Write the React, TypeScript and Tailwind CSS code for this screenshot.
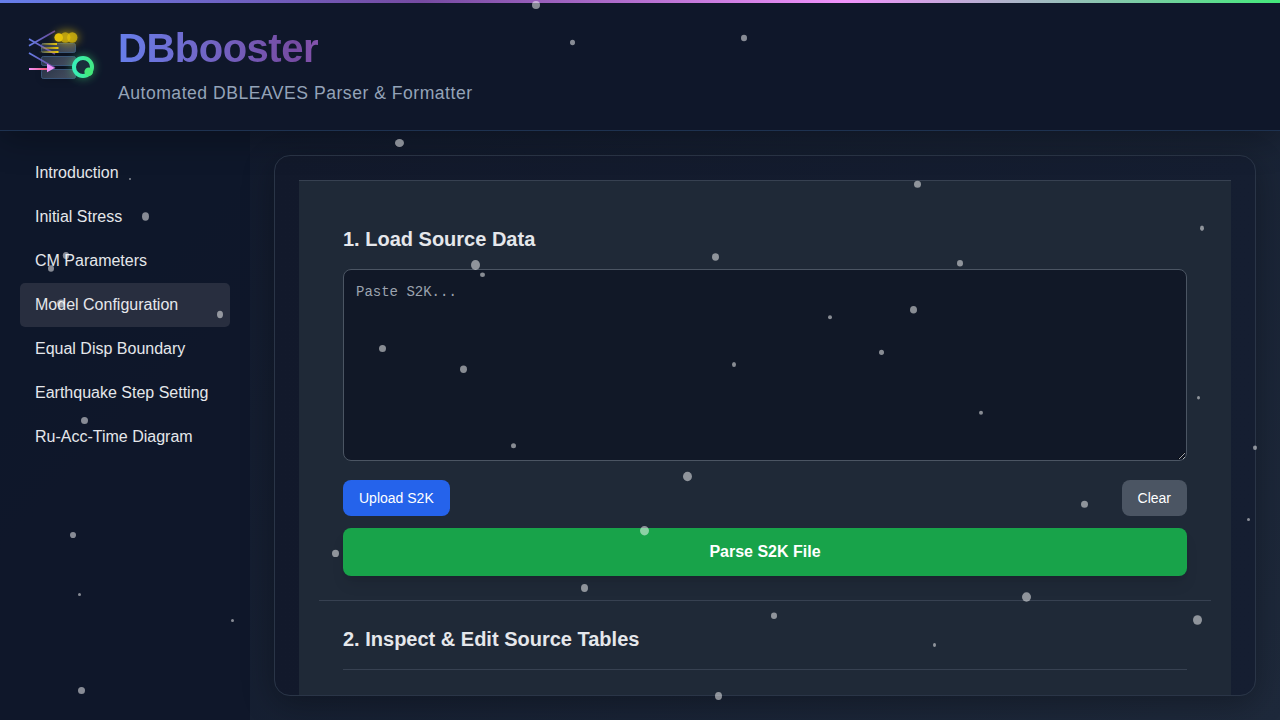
import React from "react";

const navItems = [
  "Introduction",
  "Initial Stress",
  "CM Parameters",
  "Model Configuration",
  "Equal Disp Boundary",
  "Earthquake Step Setting",
  "Ru-Acc-Time Diagram",
];

// x centre, y centre, horizontal radius, vertical radius
const particles: [number, number, number, number][] = [
  [536, 5, 4, 4], [572.5, 42.5, 2.5, 2.7], [744, 38, 3, 3.2], [399.5, 143, 4.5, 4],
  [130, 179, 1, 1], [145.5, 216.5, 3.5, 4.2], [66, 255.5, 3.2, 3.5], [51, 268.5, 3, 3.3],
  [61, 303.5, 4, 4], [220, 314.5, 3, 3.7], [84.5, 420.5, 3.5, 3.5], [73, 535, 3, 3.1],
  [79.5, 594.5, 1.5, 1.5], [232.5, 620.5, 1.5, 1.5], [81.5, 690.5, 3.5, 3.5],
  [475.5, 265, 4.5, 5], [482.5, 274.7, 2.5, 2.3], [715.5, 257, 3.5, 3.7],
  [382.5, 348.5, 3.5, 3.5], [463.5, 369.3, 3.5, 3.7], [734, 364.5, 2, 2.6],
  [917.5, 184.3, 3.5, 3.5], [1202, 228.3, 2, 2.7], [960, 263.3, 3, 3.3],
  [913.5, 309.8, 3.5, 3.8], [830, 317.2, 2, 2], [881.5, 352.3, 2.5, 2.6],
  [981, 412.8, 2, 2], [1198.5, 397.8, 1.5, 1.7], [513.5, 445.8, 2.5, 2.5],
  [687.5, 476.5, 4.5, 4.7], [644.5, 530.8, 4.5, 4.7], [335.5, 553.4, 3.5, 3.7],
  [584.5, 588, 3.5, 4.1], [718.5, 696, 3.5, 4.1], [1255, 447.8, 2, 2.2],
  [1084.5, 504.3, 3.5, 3.5], [1248.5, 519.4, 1.5, 1.5], [1026.5, 597, 4.5, 4.7],
  [774, 615.7, 3, 3.3], [934.5, 645, 1.5, 2], [1197.5, 620, 4.5, 4.8],
];

function Logo() {
  return (
    <svg width="80" height="80" viewBox="20 20 80 80" fill="none" className="shrink-0 overflow-visible">
      <defs>
        <linearGradient id="purple" gradientUnits="userSpaceOnUse" x1="29" y1="0" x2="56" y2="0">
          <stop stopColor="#667eea" />
          <stop offset="1" stopColor="#764ba2" stopOpacity=".85" />
        </linearGradient>
        <linearGradient id="pink" gradientUnits="userSpaceOnUse" x1="29" y1="0" x2="48" y2="0">
          <stop stopColor="#f093fb" />
          <stop offset="1" stopColor="#f5576c" />
        </linearGradient>
        <linearGradient id="gold" gradientUnits="userSpaceOnUse" x1="39" y1="0" x2="58" y2="0">
          <stop stopColor="#ffd700" stopOpacity="0" />
          <stop offset="1" stopColor="#ffd700" stopOpacity=".9" />
        </linearGradient>
        <linearGradient id="disk" x1="0" y1="0" x2="1" y2="0.3">
          <stop stopColor="#2b364a" />
          <stop offset="1" stopColor="#434c5d" />
        </linearGradient>
        <linearGradient id="ring" x1="0" y1="0" x2="1" y2="0">
          <stop stopColor="#38f0b8" />
          <stop offset="1" stopColor="#41ea88" />
        </linearGradient>
        <filter id="glow" x="-100%" y="-200%" width="300%" height="500%">
          <feGaussianBlur stdDeviation="4" />
        </filter>
      </defs>
      <rect x="43" y="46" width="32" height="34" rx="3" fill="#000" opacity=".2" filter="url(#glow)" />
      <g fill="url(#disk)" stroke="#3d5b80" strokeOpacity=".9">
        <rect x="41.5" y="43.5" width="34" height="9" rx="1.8" />
        <rect x="41.5" y="56.5" width="34" height="9" rx="1.8" />
        <rect x="41.5" y="69.5" width="34" height="9" rx="1.8" />
      </g>
      <g stroke="url(#purple)" strokeWidth="1.7">
        <path d="M29 39 55 54" />
        <path d="M29 45.8 55 31" />
        <path d="M29 53 55 68" />
      </g>
      <rect x="29" y="68" width="19" height="2" fill="url(#pink)" />
      <path d="M47 63.7v8.6l7.8-4.3Z" fill="#f093fb" />
      <g fill="url(#gold)">
        <rect x="42" y="43" width="15" height="2" />
        <rect x="41" y="47" width="17.5" height="2" />
        <rect x="39" y="51" width="19.5" height="2" />
      </g>
      <ellipse cx="67" cy="37.5" rx="12" ry="7" fill="#ffd700" opacity=".5" filter="url(#glow)" />
      <g fill="#e6c30a">
        <circle cx="72.3" cy="37.5" r="5.2" opacity=".7" />
        <circle cx="65.3" cy="37.5" r="5.2" opacity=".65" />
        <circle cx="58.7" cy="37.5" r="4.3" />
      </g>
      <circle cx="83" cy="67" r="12" fill="#43e97b" opacity=".42" filter="url(#glow)" />
      <circle cx="83" cy="67" r="9" fill="#1a2e3c" stroke="url(#ring)" strokeWidth="4" />
      <circle cx="88.7" cy="71.7" r="4.3" fill="#43e97b" />
    </svg>
  );
}

export default function App() {
  return (
    <div className="relative flex h-[720px] w-[1280px] flex-col overflow-hidden bg-linear-135 from-[#0f172a] to-[#1e293b] font-['Liberation_Sans',sans-serif] text-[#e5e7eb]">
      <header className="relative z-10 flex h-[131px] shrink-0 items-start gap-[18px] border-b border-[#1e3250] bg-[#0f172a] px-5 pt-5 shadow-[0_8px_32px_rgba(0,0,0,0.3)]">
        <div className="absolute inset-x-0 top-0 h-[3px] bg-[linear-gradient(90deg,#667eea_0%,#764ba2_33%,#f093fb_66%,#43e97b_100%)]" />
        <Logo />
        <div className="pt-1">
          <h1 className="w-[355px] bg-linear-90 from-[#667eea] via-[#764ba2] to-[#f093fb] bg-clip-text text-[40px] leading-[48px] font-bold tracking-[-0.5px] text-transparent">
            DBbooster
          </h1>
          <p className="mt-[7px] text-[17.6px] leading-7 tracking-[0.5px] text-[#94a3b8]">
            Automated DBLEAVES Parser &amp; Formatter
          </p>
        </div>
      </header>

      <div className="flex min-h-0 flex-1">
        <nav className="w-[250px] shrink-0 bg-[#0f172a]/95 p-5">
          {navItems.map((item) => (
            <a
              key={item}
              className={
                item === "Model Configuration"
                  ? "block rounded-[5px] bg-[#282e3f] px-[15px] py-2.5 leading-6"
                  : "block px-[15px] py-2.5 leading-6"
              }
            >
              {item}
            </a>
          ))}
        </nav>

        <main className="min-w-0 flex-1 p-6">
          <div className="h-[541px] overflow-hidden rounded-2xl border border-[#2a3547] bg-linear-90 from-[#12192b] to-[#151e31] px-6 pt-6 shadow-[0_8px_32px_rgba(0,0,0,0.3)]">
            <div className="h-[600px] border-t border-[#374151] bg-[#1f2937] p-5">
              <section className="border-b border-[#374151] p-6">
                <h2 className="mb-4 text-xl font-semibold">1. Load Source Data</h2>
                <textarea
                  placeholder="Paste S2K..."
                  className="block h-48 w-full rounded-lg border border-[#4b5563] bg-[#111827] p-3 font-['Liberation_Mono',monospace] text-sm placeholder:text-[#9ca3af]"
                />
                <div className="mt-[19px] flex justify-between text-sm text-white">
                  <button className="rounded-lg bg-[#2563eb] px-4 py-2">Upload S2K</button>
                  <button className="rounded-lg bg-[#4b5563] px-4 py-2">Clear</button>
                </div>
                <button className="mt-3 h-12 w-full rounded-lg bg-[#18a34a] font-bold text-white shadow-lg">
                  Parse S2K File
                </button>
              </section>
              <section className="p-6">
                <h2 className="border-b border-[#374151] pb-4 text-xl font-semibold">
                  2. Inspect &amp; Edit Source Tables
                </h2>
              </section>
            </div>
          </div>
        </main>
      </div>

      <svg className="pointer-events-none absolute inset-0 z-20" width="1280" height="720" fill="#fff" fillOpacity=".5">
        {particles.map(([cx, cy, rx, ry]) => (
          <ellipse key={`${cx}-${cy}`} cx={cx} cy={cy} rx={rx} ry={ry} />
        ))}
      </svg>
    </div>
  );
}
